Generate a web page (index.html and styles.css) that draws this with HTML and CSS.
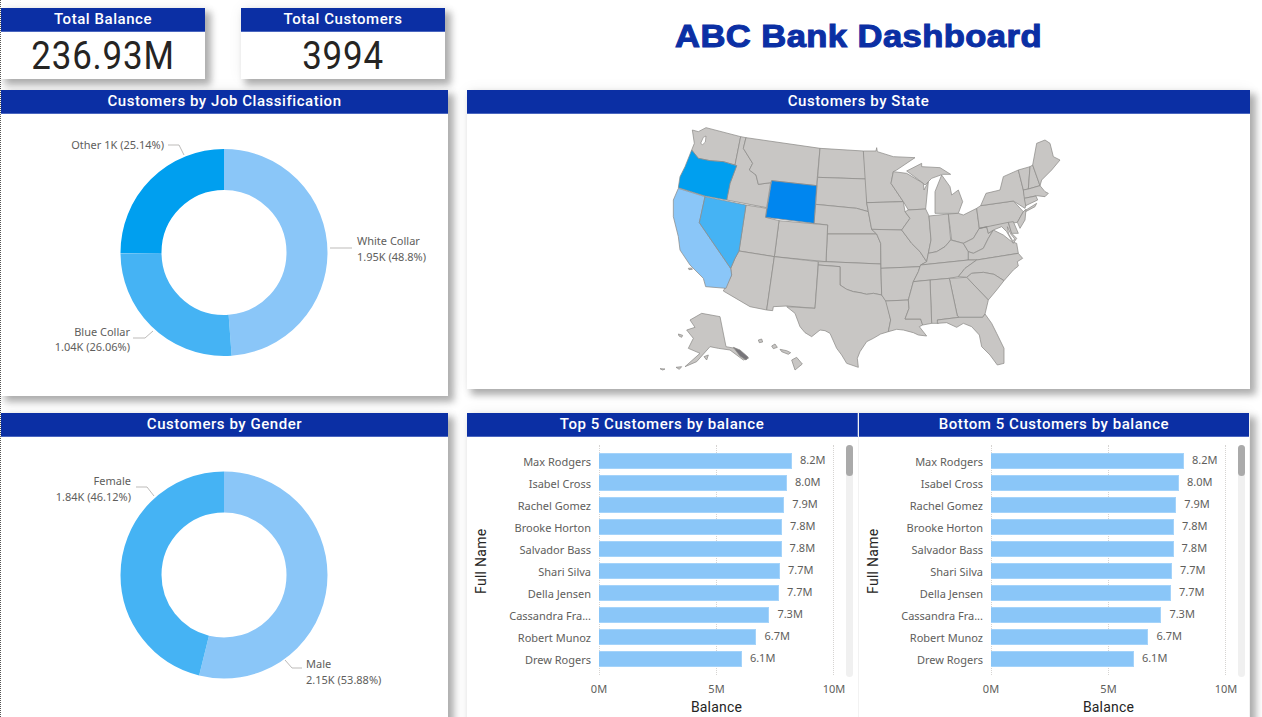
FILE: index.html
```html
<!DOCTYPE html>
<html lang="en">
<head>
<meta charset="utf-8">
<title>ABC Bank Dashboard</title>
<link rel="stylesheet" href="styles.css">
</head>
<body>
<div class="dashboard">
  <section class="row-top">
    <div class="kpis">
      <div class="kpi"><h2 class="head head-kpi">Total Balance</h2><div class="kpi-value">236.93M</div></div>
      <div class="kpi"><h2 class="head head-kpi">Total Customers</h2><div class="kpi-value">3994</div></div>
    </div>
    <h1 class="title">ABC Bank Dashboard</h1>
  </section>

  <section class="row-mid">
    <div class="panel panel-tall">
      <h2 class="head">Customers by Job Classification</h2>
      <svg class="donut" width="447" height="275" viewBox="0 0 447 275">
        <g transform="rotate(-90 223 138.5)" fill="none" stroke-width="41">
          <circle cx="223" cy="138.5" r="83" pathLength="100" stroke="#8ac6f8" stroke-dasharray="48.8 51.2"/>
          <circle cx="223" cy="138.5" r="83" pathLength="100" stroke="#45b3f4" stroke-dasharray="26.06 73.94" stroke-dashoffset="-48.8"/>
          <circle cx="223" cy="138.5" r="83" pathLength="100" stroke="#009fef" stroke-dasharray="25.14 74.86" stroke-dashoffset="-74.86"/>
        </g>
        <path class="leader" d="M167 31H178L183 41M351 134H329M132 224H144L152 217"/>
        <text class="lbl" x="163" y="35" text-anchor="end">Other 1K (25.14%)</text>
        <text class="lbl" x="356" y="131">White Collar</text>
        <text class="lbl" x="356" y="147">1.95K (48.8%)</text>
        <text class="lbl" x="129" y="222" text-anchor="end">Blue Collar</text>
        <text class="lbl" x="129" y="237" text-anchor="end">1.04K (26.06%)</text>
      </svg>
    </div>
    <div class="panel">
      <h2 class="head">Customers by State</h2>
      <div class="map-wrap">
        <svg class="map" width="440" height="264" viewBox="0 30 1320 792">
          <polygon class="st" points="157,60 175,65 198,53 302,80 285,165 250,155 210,152 175,145 155,120 163,100"/>
          <polygon class="st" points="302,80 318,83 310,115 338,160 328,180 348,195 355,223 392,218 380,293 260,270 270,220 290,167 285,165"/>
          <polygon class="st" points="318,83 540,115 532,202 530,227 395,212 392,218 355,223 348,195 328,180 338,160 310,115"/>
          <polygon class="st" points="540,115 670,123 680,207 533,202"/>
          <polygon class="st" points="533,202 680,207 680,278 685,305 650,295 527,283"/>
          <polygon class="st" points="527,283 650,295 685,305 695,358 710,372 562,372 563,345 522,340"/>
          <polygon class="st" points="562,372 710,372 722,400 722,462 558,455"/>
          <polygon class="st" points="417,332 563,345 558,455 403,440"/>
          <polygon class="st" points="318,285 380,295 377,322 417,332 403,440 297,423"/>
          <polygon class="st" points="297,423 403,440 380,600 330,590 250,543 262,520 275,495 272,475 285,445"/>
          <polygon class="st" points="403,440 535,455 525,595 440,588 400,590 398,602 380,600"/>
          <polygon class="st" points="535,455 558,455 722,462 725,555 700,550 680,553 660,548 640,545 620,538 600,525 600,470 535,465"/>
          <polygon class="st" points="535,465 600,470 600,525 620,538 640,545 660,548 680,553 700,550 725,555 740,575 752,630 745,665 722,672 700,685 680,695 660,725 652,745 655,772 620,760 605,735 590,715 570,670 555,662 540,660 515,680 495,668 480,650 465,610 440,590 525,595"/>
          <polygon class="st" points="670,123 708,123 710,113 712,125 760,140 825,143 770,180 760,185 753,220 790,275 680,278"/>
          <polygon class="st" points="680,278 790,275 795,305 810,325 785,360 695,358 685,305"/>
          <polygon class="st" points="695,358 785,360 815,400 840,425 860,455 842,465 840,470 723,475 722,400 710,372"/>
          <polygon class="st" points="723,475 840,470 835,485 820,515 805,570 737,573 725,555"/>
          <polygon class="st" points="737,573 805,570 807,595 795,627 842,627 848,645 838,650 860,678 835,675 820,668 790,660 770,658 745,665 752,630"/>
          <polygon class="st" points="760,185 800,190 850,220 852,240 865,215 857,297 805,300 790,275 753,220"/>
          <polygon class="st" points="805,300 857,297 867,318 873,390 865,430 860,455 840,425 815,400 785,360 810,325 795,305"/>
          <polygon class="st" points="800,183 845,160 845,170 900,173 932,193 908,193 875,205 855,225 850,220"/>
          <polygon class="st" points="885,310 885,245 905,195 930,230 935,255 955,240 968,275 955,310"/>
          <polygon class="st" points="867,318 925,312 932,390 915,410 890,425 865,430 873,390"/>
          <polygon class="st" points="925,312 955,310 970,315 1010,295 1018,355 1000,385 970,400 935,390"/>
          <polygon class="st" points="860,455 865,430 890,425 915,410 932,390 970,400 985,425 985,450 842,465"/>
          <polygon class="st" points="985,425 970,400 1000,385 1018,355 1040,350 1045,370 1060,360 1045,385 1030,415 1000,430"/>
          <polygon class="st" points="985,450 985,425 1000,430 1030,415 1045,385 1060,360 1090,375 1115,395 1130,400 1135,430 1010,450"/>
          <polygon class="st" points="842,465 985,450 1010,450 975,475 955,500 928,505 820,515 835,485 840,470"/>
          <polygon class="st" points="955,500 975,475 1010,450 1135,430 1148,445 1132,455 1135,468 1120,480 1092,512 1062,493 1030,487 995,490 980,502"/>
          <polygon class="st" points="980,502 995,490 1030,487 1062,493 1092,512 1070,540 1045,570"/>
          <polygon class="st" points="928,505 980,502 1045,570 1035,612 1028,622 957,622 952,618"/>
          <polygon class="st" points="870,510 928,505 952,618 957,622 892,630 895,640 875,640"/>
          <polygon class="st" points="820,515 870,510 875,640 848,645 842,627 795,627 807,595 805,570"/>
          <polygon class="st" points="892,630 957,622 1028,622 1035,612 1055,640 1070,670 1092,715 1092,760 1072,765 1050,735 1025,710 1018,675 995,650 970,640 950,652 920,638 892,640"/>
          <polygon class="st" points="1010,295 1022,287 1120,273 1150,305 1132,337 1018,355"/>
          <polygon class="st" points="1022,287 1038,250 1080,240 1090,200 1135,180 1150,240 1158,285 1155,295 1120,273"/>
          <polygon class="st" points="1150,305 1190,280 1185,290 1155,306"/>
          <polygon class="st" points="1150,305 1158,298 1155,330 1140,355 1132,337"/>
          <polygon class="st" points="1018,355 1105,337 1115,370 1130,385 1120,400 1100,365 1085,350 1060,360 1045,370 1040,350"/>
          <polygon class="st" points="1105,337 1120,335 1135,370 1115,370"/>
          <polygon class="st" points="1135,180 1170,170 1165,237 1150,240"/>
          <polygon class="st" points="1170,170 1178,165 1200,227 1165,237"/>
          <polygon class="st" points="1178,165 1190,100 1215,90 1230,100 1240,140 1260,150 1235,180 1205,210 1200,227"/>
          <polygon class="st" points="1150,240 1165,237 1200,227 1215,245 1225,250 1215,260 1190,257 1153,265"/>
          <polygon class="st" points="1153,265 1188,258 1193,270 1157,287"/>
          <polygon class="st" points="150,630 185,610 240,620 258,710 285,715 325,745 310,750 270,720 235,715 210,710 170,755 135,770 180,730 145,715 160,685 140,660 165,652"/>
          <polygon class="st-dark" points="280,712 300,720 325,742 318,750 300,738"/>
          <polygon class="st" points="192,740 205,735 200,750"/>
          <polygon class="st" points="108,772 125,770 118,778"/>
          <polygon class="st" points="60,776 75,777 68,780"/>
          <polygon class="st" points="455,750 470,742 487,762 465,780"/>
          <polygon class="st" points="420,718 440,722 452,728 445,733 425,725"/>
          <polygon class="st" points="395,708 405,702 412,712 400,716"/>
          <polygon class="st" points="355,690 365,687 368,696 358,698"/>
          <polygon class="st" points="115,672 128,676 125,682 117,678"/>
          <polygon class="st" points="145,475 155,474 157,478 147,479"/>
          <polygon class="hole" points="182,100 190,82 198,78 196,96 188,104"/>
          <polygon class="hole" points="1102,350 1112,372 1125,388 1118,392 1106,372"/>
          <polygon class="st-oregon" points="155,120 175,145 210,152 250,155 290,167 270,220 260,270 195,258 115,233 120,200 135,170"/>
          <polygon class="st-wyoming" points="395,212 530,227 522,340 377,322"/>
          <polygon class="st-california" points="115,235 195,260 178,338 272,475 275,495 258,535 197,530 190,505 150,465 120,420 115,380 100,320 100,270"/>
          <polygon class="st-nevada" points="195,260 318,285 297,423 285,445 272,475 178,338"/>
        </svg>
      </div>
    </div>
  </section>

  <section class="row-bot">
    <div class="panel">
      <h2 class="head">Customers by Gender</h2>
      <svg class="donut" width="447" height="280" viewBox="0 0 447 280">
        <g transform="rotate(-90 223 138)" fill="none" stroke-width="41">
          <circle cx="223" cy="138" r="83" pathLength="100" stroke="#8ac6f8" stroke-dasharray="53.88 46.12"/>
          <circle cx="223" cy="138" r="83" pathLength="100" stroke="#45b3f4" stroke-dasharray="46.12 53.88" stroke-dashoffset="-53.88"/>
        </g>
        <path class="leader" d="M135 50H146L153 59M284 223L291 231H301"/>
        <text class="lbl" x="130" y="48" text-anchor="end">Female</text>
        <text class="lbl" x="130" y="64" text-anchor="end">1.84K (46.12%)</text>
        <text class="lbl" x="305" y="231">Male</text>
        <text class="lbl" x="305" y="247">2.15K (53.88%)</text>
      </svg>
    </div>
    <div class="bar-pair">
      <div class="panel-flat">
        <h2 class="head">Top 5 Customers by balance</h2>
        <div class="bar-body">
          <div class="y-title">Full Name</div>
          <div class="plot">
            <div class="gridlines"><i></i><i></i><i></i></div>
            <div class="bar-rows">
              <div class="bar-row"><span class="name">Max Rodgers</span><div class="track"><b class="bar" style="width:82.1%"></b><span class="val">8.2M</span></div></div>
              <div class="bar-row"><span class="name">Isabel Cross</span><div class="track"><b class="bar" style="width:80%"></b><span class="val">8.0M</span></div></div>
              <div class="bar-row"><span class="name">Rachel Gomez</span><div class="track"><b class="bar" style="width:78.8%"></b><span class="val">7.9M</span></div></div>
              <div class="bar-row"><span class="name">Brooke Horton</span><div class="track"><b class="bar" style="width:77.9%"></b><span class="val">7.8M</span></div></div>
              <div class="bar-row"><span class="name">Salvador Bass</span><div class="track"><b class="bar" style="width:77.7%"></b><span class="val">7.8M</span></div></div>
              <div class="bar-row"><span class="name">Shari Silva</span><div class="track"><b class="bar" style="width:77%"></b><span class="val">7.7M</span></div></div>
              <div class="bar-row"><span class="name">Della Jensen</span><div class="track"><b class="bar" style="width:76.6%"></b><span class="val">7.7M</span></div></div>
              <div class="bar-row"><span class="name">Cassandra Fra...</span><div class="track"><b class="bar" style="width:72.5%"></b><span class="val">7.3M</span></div></div>
              <div class="bar-row"><span class="name">Robert Munoz</span><div class="track"><b class="bar" style="width:67%"></b><span class="val">6.7M</span></div></div>
              <div class="bar-row"><span class="name">Drew Rogers</span><div class="track"><b class="bar" style="width:60.8%"></b><span class="val">6.1M</span></div></div>
            </div>
            <div class="ticks"><span>0M</span><span>5M</span><span>10M</span></div>
            <div class="x-title">Balance</div>
          </div>
          <div class="scroll"><div class="thumb"></div></div>
        </div>
      </div>
      <div class="panel-flat">
        <h2 class="head">Bottom 5 Customers by balance</h2>
        <div class="bar-body">
          <div class="y-title">Full Name</div>
          <div class="plot">
            <div class="gridlines"><i></i><i></i><i></i></div>
            <div class="bar-rows">
              <div class="bar-row"><span class="name">Max Rodgers</span><div class="track"><b class="bar" style="width:82.1%"></b><span class="val">8.2M</span></div></div>
              <div class="bar-row"><span class="name">Isabel Cross</span><div class="track"><b class="bar" style="width:80%"></b><span class="val">8.0M</span></div></div>
              <div class="bar-row"><span class="name">Rachel Gomez</span><div class="track"><b class="bar" style="width:78.8%"></b><span class="val">7.9M</span></div></div>
              <div class="bar-row"><span class="name">Brooke Horton</span><div class="track"><b class="bar" style="width:77.9%"></b><span class="val">7.8M</span></div></div>
              <div class="bar-row"><span class="name">Salvador Bass</span><div class="track"><b class="bar" style="width:77.7%"></b><span class="val">7.8M</span></div></div>
              <div class="bar-row"><span class="name">Shari Silva</span><div class="track"><b class="bar" style="width:77%"></b><span class="val">7.7M</span></div></div>
              <div class="bar-row"><span class="name">Della Jensen</span><div class="track"><b class="bar" style="width:76.6%"></b><span class="val">7.7M</span></div></div>
              <div class="bar-row"><span class="name">Cassandra Fra...</span><div class="track"><b class="bar" style="width:72.5%"></b><span class="val">7.3M</span></div></div>
              <div class="bar-row"><span class="name">Robert Munoz</span><div class="track"><b class="bar" style="width:67%"></b><span class="val">6.7M</span></div></div>
              <div class="bar-row"><span class="name">Drew Rogers</span><div class="track"><b class="bar" style="width:60.8%"></b><span class="val">6.1M</span></div></div>
            </div>
            <div class="ticks"><span>0M</span><span>5M</span><span>10M</span></div>
            <div class="x-title">Balance</div>
          </div>
          <div class="scroll"><div class="thumb"></div></div>
        </div>
      </div>
    </div>
  </section>
</div>
</body>
</html>
```
FILE: styles.css
```css
html, body { margin: 0; padding: 0; background: #fff; }
body { width: 1262px; height: 717px; overflow: hidden; }
.dashboard {
  height: 717px;
  box-sizing: border-box;
  border-left: 1px dotted #555;
  padding-top: 8px;
  display: flex;
  flex-direction: column;
  font-family: "Noto Sans", sans-serif;
  overflow: hidden;
}
.row-top, .row-mid, .row-bot {
  display: grid;
  grid-template-columns: 447px 783px;
  column-gap: 19px;
  flex: none;
  align-items: start;
}
.row-top { height: 71px; margin-bottom: 11px; }
.row-mid { height: 299px; grid-template-rows: 299px; margin-bottom: 24px; }
.row-bot { height: 330px; grid-template-rows: 330px; }
.kpis { display: flex; gap: 36px; }
.kpi {
  width: 204px;
  height: 71px;
  background: #fff;
  box-shadow: 5px 5px 7px 1px rgba(0,0,0,.3), 0 0 14px rgba(0,0,0,.06);
}
.head {
  margin: 0;
  height: 24px;
  box-sizing: border-box;
  background: #0b2fa4;
  border-bottom: 1px solid #4a66bf;
  color: #fff;
  font: 500 15px/23px Roboto, sans-serif;
  letter-spacing: .55px;
  text-align: center;
}
.kpi-value {
  font: 400 39px/49px Roboto, sans-serif;
  letter-spacing: .9px;
  color: #252423;
  text-align: center;
  transform: scaleX(.895);
}
.title {
  margin: 9px 0 0;
  text-align: center;
  color: #0b2fa4;
  font: 700 32px/38px "Liberation Sans", sans-serif;
  -webkit-text-stroke: 1.1px #0b2fa4;
  letter-spacing: .4px;
  transform: scaleX(1.08);
}
.panel {
  height: 100%;
  background: #fff;
  box-shadow: 5px 5px 7px 1px rgba(0,0,0,.3), 0 0 14px rgba(0,0,0,.06);
}
.panel-tall { height: 306px; }
.donut { display: block; }
.lbl { font-size: 11px; fill: #605e5c; }
.leader { fill: none; stroke: #bdbbb9; stroke-width: 1; }
.map-wrap { display: flex; justify-content: center; padding: 6px 0 0 3px; }
.map { display: block; }
.st, .st-dark, .st-oregon, .st-wyoming, .st-california, .st-nevada {
  stroke: #8c8a88;
  stroke-width: 2.2;
  stroke-linejoin: round;
}
.st { fill: #c8c6c4; }
.st-dark { fill: #77757a; }
.hole { fill: #fff; stroke: #8c8a88; stroke-width: 2; }
.st-oregon { fill: #009fef; }
.st-wyoming { fill: #0086ef; }
.st-california { fill: #8ac6f8; }
.st-nevada { fill: #45b3f4; }
.bar-pair {
  height: 100%;
  display: grid;
  grid-template-columns: 392px 391px;
  background: #fff;
  box-shadow: 5px 5px 7px 1px rgba(0,0,0,.3), 0 0 14px rgba(0,0,0,.06);
}
.panel-flat { border-right: 1px solid #f2f2f2; }
.bar-pair .panel-flat:first-child .head { border-right: 1px solid #4a66bf; }
.bar-body {
  display: flex;
  align-items: flex-start;
  padding: 8px 0 0 6px;
}
.y-title {
  width: 16px;
  height: 232px;
  writing-mode: vertical-rl;
  transform: rotate(180deg);
  text-align: center;
  font: 400 14px/16px Roboto, sans-serif;
  letter-spacing: .3px;
  color: #252423;
}
.plot { position: relative; width: 345px; flex: none; margin-right: 12px; }
.gridlines {
  position: absolute;
  left: 110px;
  top: 0;
  width: 235px;
  height: 230px;
  display: flex;
  justify-content: space-between;
}
.gridlines i { width: 0; border-left: 1px dotted #d6d4d2; }
.bar-rows { position: relative; padding-top: 5px; }
.bar-row { display: flex; align-items: center; height: 22px; }
.name {
  width: 102px;
  margin-right: 8px;
  text-align: right;
  font-size: 11px;
  color: #605e5c;
  white-space: nowrap;
}
.track { width: 235px; display: flex; align-items: center; }
.bar {
  height: 16px;
  box-sizing: border-box;
  background: #8ac6f8;
  border: 1px solid #a4d3fa;
  border-left: 0;
  flex: none;
}
.val { margin: 0 0 3px 8px; font-size: 11px; color: #605e5c; white-space: nowrap; }
.ticks {
  display: flex;
  justify-content: space-between;
  margin: 10px 0 0 110px;
  width: 235px;
  height: 18px;
  font-size: 11px;
  line-height: 18px;
  color: #605e5c;
}
.ticks span { width: 0; display: flex; justify-content: center; white-space: nowrap; }
.x-title {
  margin-left: 110px;
  width: 235px;
  text-align: center;
  font: 400 14px/18px Roboto, sans-serif;
  letter-spacing: .2px;
  color: #252423;
}
.scroll { width: 7px; height: 232px; background: #f0f0f0; border-radius: 4px; flex: none; }
.thumb { height: 31px; background: #aaa; border-radius: 4px; }
```
